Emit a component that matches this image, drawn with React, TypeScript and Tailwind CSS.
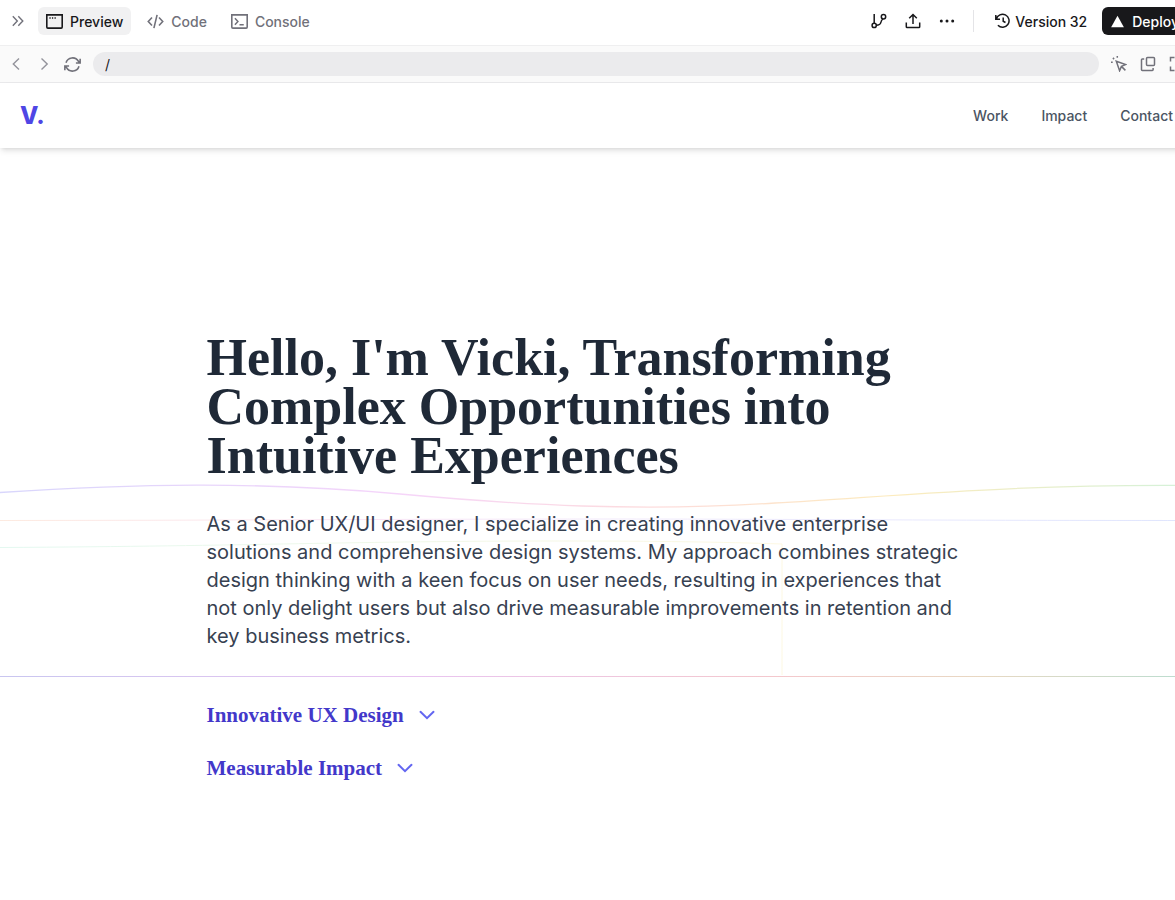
import React from "react";

const stroke = { fill: "none", stroke: "currentColor", strokeWidth: 1.5 } as const;

function Icon({ children, className = "size-4" }: { children: React.ReactNode; className?: string }) {
  return (
    <svg viewBox="0 0 16 16" className={`shrink-0 ${className}`} aria-hidden="true" {...stroke}>
      {children}
    </svg>
  );
}

function Toolbar() {
  return (
    <div className="flex h-[46px] items-center border-b border-[#efeff0] bg-white pl-[10px] pr-2 pb-[3px] text-[14px] font-medium text-[#18181b]">
      <button aria-label="Collapse panel" className="mr-3 text-[#71717a]">
        <Icon><path d="M2.8 3.2 7.3 8l-4.5 4.8M8.3 3.2 12.8 8l-4.5 4.8" strokeWidth="1.4" /></Icon>
      </button>
      <button className="flex h-7 items-center gap-[7px] rounded-md bg-[#f1f1f2] px-2">
        <Icon className="size-[17px]">
          <path d="M.75 1.75h14.5v11.5a1 1 0 0 1-1 1H1.75a1 1 0 0 1-1-1z" />
          <path d="M3.2 4.7h1.2M5.6 4.7h1.2M8 4.7h1.2" strokeWidth="1.2" />
        </Icon>
        Preview
      </button>
      <button className="ml-4 flex items-center gap-[7px] text-[#71717a]">
        <Icon className="size-[17px]"><path d="M4.7 4.2 1.2 8l3.5 3.8M11.3 4.2 14.8 8l-3.5 3.8M9.5 1.8 6.5 14.2" /></Icon>
        Code
      </button>
      <button className="ml-6 flex items-center gap-[7px] text-[#71717a]">
        <Icon className="size-[17px]">
          <path d="M.75 1.75h14.5v11.5a1 1 0 0 1-1 1H1.75a1 1 0 0 1-1-1z" />
          <path d="m3.7 5 2.8 3-2.8 3M8 11h4" strokeWidth="1.4" />
        </Icon>
        Console
      </button>
      <div className="ml-auto flex items-center">
        <button aria-label="Branches" className="mr-[18px]">
          <Icon>
            <path d="M3.2 1v9.2M5.3 12.3c4.2 0 4.2-1.6 4.7-3.4.3-1.3 1-2.2 2-2.9" />
            <circle cx="3.2" cy="12.4" r="2.1" />
            <circle cx="12.5" cy="3.8" r="2.2" />
          </Icon>
        </button>
        <button aria-label="Share" className="mr-[18px]">
          <Icon><path d="M1.3 9.5v4.2c0 .5.3.8.8.8h11.8c.5 0 .8-.3.8-.8V9.5M8 11V1.8M4.2 5.3 8 1.5l3.8 3.8" /></Icon>
        </button>
        <button aria-label="More" className="mr-[18px]">
          <Icon>
            <g fill="currentColor" stroke="none">
              <circle cx="2.3" cy="8" r="1.5" /><circle cx="8" cy="8" r="1.5" /><circle cx="13.7" cy="8" r="1.5" />
            </g>
          </Icon>
        </button>
        <div className="mr-[21px] h-[22px] w-px bg-[#e4e4e7]" />
        <button className="mr-[15px] flex items-center gap-1">
          <Icon>
            <path d="M.8 2v4.2H5M1.3 6A6.5 6.5 0 1 1 2.9 12.3M8.2 4.5v3.7l2.3 1.3" />
          </Icon>
          Version 32
        </button>
        <button className="flex h-7 items-center gap-[7px] rounded-md bg-[#18181b] px-2 text-white">
          <Icon className="size-[15px]"><path d="m8 1.8 6.8 12.2H1.2z" fill="currentColor" stroke="none" /></Icon>
          Deploy
        </button>
      </div>
    </div>
  );
}

function AddressBar() {
  return (
    <div className="flex h-[37px] items-center border-b border-[#e9e9eb] bg-[#fafafa] pl-2 pr-[10px] text-[#71717a]">
      <button aria-label="Back" className="mr-3 text-[#93939b]">
        <Icon><path d="M11 2.5 5.3 8l5.7 5.5" strokeWidth="1.4" /></Icon>
      </button>
      <button aria-label="Forward" className="mr-3 text-[#93939b]">
        <Icon><path d="M5.5 2.5 11.2 8l-5.7 5.5" strokeWidth="1.4" /></Icon>
      </button>
      <button aria-label="Reload" className="mr-3">
        <Icon className="size-[17px]">
          <path d="M1.9 6.4A6.4 6.4 0 0 1 13.6 5l1.2 1.4M15.2 2.6v4h-4M14.1 9.6A6.4 6.4 0 0 1 2.4 11L1.2 9.6M.8 13.4v-4h4" />
        </Icon>
      </button>
      <input
        aria-label="Path"
        defaultValue="/"
        className="h-6 min-w-0 flex-1 rounded-full bg-[#ebebed] px-3 text-[14px] text-[#18181b] outline-none"
      />
      <div className="ml-3 flex gap-[13px]">
        <button aria-label="Select element">
          <Icon>
            <path d="m5.3 5.3 9.4 3.3-4.3 1.8-1.8 4.3zM10.4 10.4l4 4" />
            <path d="M6.3 0v1.7M0 6.3h1.7M1.9 1.9 3.1 3.1" />
          </Icon>
        </button>
        <button aria-label="Open in new window">
          <Icon>
            <rect x="6.5" y="1.5" width="8" height="8" rx="1" />
            <path d="M4.2 3H2.3c-.5 0-.8.3-.8.8v10c0 .4.3.7.8.7h10c.5 0 .8-.3.8-.7V12" />
          </Icon>
        </button>
        <button aria-label="Full screen">
          <Icon><path d="M1.5 5.5v-4h4M10.5 1.5h4v4M14.5 10.5v4h-4M5.5 14.5h-4v-4" /></Icon>
        </button>
      </div>
    </div>
  );
}

function Backdrop() {
  return (
    <svg
      className="pointer-events-none absolute inset-x-0 top-[321px] h-[220px] w-full"
      viewBox="0 0 1195 220"
      preserveAspectRatio="none"
      fill="none"
      aria-hidden="true"
    >
      <defs>
        <linearGradient id="rainbow" gradientUnits="userSpaceOnUse" x1="0" y1="0" x2="1195" y2="0">
          <stop offset="0" stopColor="#d8d6fc" />
          <stop offset="0.33" stopColor="#f5d5fa" />
          <stop offset="0.55" stopColor="#fddcdc" />
          <stop offset="0.75" stopColor="#fcebbd" />
          <stop offset="1" stopColor="#d3f2da" />
        </linearGradient>
        <linearGradient id="base" gradientUnits="userSpaceOnUse" x1="0" y1="0" x2="1195" y2="0">
          <stop offset="0" stopColor="#c9c6f0" />
          <stop offset="0.35" stopColor="#e9c4f0" />
          <stop offset="0.65" stopColor="#f4c8cd" />
          <stop offset="0.82" stopColor="#e8d8c2" />
          <stop offset="1" stopColor="#b9ddd0" />
        </linearGradient>
        <linearGradient id="straight" gradientUnits="userSpaceOnUse" x1="0" y1="0" x2="1195" y2="0">
          <stop offset="0" stopColor="#fdeae0" />
          <stop offset="0.3" stopColor="#fae5f5" />
          <stop offset="0.6" stopColor="#eeeafd" />
          <stop offset="1" stopColor="#dfe5fd" />
        </linearGradient>
        <linearGradient id="faint" gradientUnits="userSpaceOnUse" x1="0" y1="0" x2="782" y2="0">
          <stop offset="0" stopColor="#e3f8f0" />
          <stop offset="1" stopColor="#fdf8e2" />
        </linearGradient>
      </defs>
      <path d="M0 23.5C130 15 260 12 400 25C520 36 640 43 775 34C910 26 1020 15 1195 16.5" stroke="url(#rainbow)" strokeWidth="1.3" />
      <path d="M0 51.5C200 51.5 400 50 600 50S900 51.5 1195 51.5" stroke="url(#straight)" />
      <path d="M0 78.5C260 77 350 72 560 72C660 72 720 73 782 75V206" stroke="url(#faint)" />
      <path d="M0 207.5C400 207.5 800 207.4 1195 207.5" stroke="url(#base)" strokeWidth="1.2" />
    </svg>
  );
}

function Disclosure({ title }: { title: string }) {
  return (
    <button className="flex items-center gap-[14px] font-['Liberation_Serif',serif] text-[21px] leading-7 font-bold text-[#4338ca]">
      {title}
      <Icon className="size-[18px] text-[#6366f1]"><path d="m2.2 5.2 5.8 5.6 5.8-5.6" strokeLinecap="round" strokeWidth="1.8" /></Icon>
    </button>
  );
}

export default function App() {
  return (
    <div className="min-h-screen overflow-hidden bg-white font-['Inter',sans-serif]">
      <div className="-mr-5">
        <Toolbar />
        <AddressBar />
        <header className="relative flex h-[65px] items-center justify-between bg-white pr-[22px] pl-5 shadow-md">
          <a href="#top" className="text-[24px] leading-8 font-extrabold text-[#4f46e5]">V.</a>
          <nav className="flex gap-[33px] text-[14px] font-medium text-[#4b5563]">
            <a href="#work">Work</a>
            <a href="#impact">Impact</a>
            <a href="#contact">Contact</a>
          </nav>
        </header>
        <main id="top" className="relative pt-[185px] pb-[100px]">
          <Backdrop />
          <section className="relative mx-auto w-full max-w-[782px]">
            <h1 className="font-['Liberation_Serif',serif] text-[52px] leading-[49px] font-bold text-[#1f2937]">
              Hello, I'm Vicki, Transforming
              <br />
              Complex Opportunities into
              <br />
              Intuitive Experiences
            </h1>
            <p className="mt-[30px] max-w-[764px] text-[20px] leading-[28px] text-[#374151]">
              As a Senior UX/UI designer, I specialize in creating innovative enterprise solutions and comprehensive
              design systems. My approach combines strategic design thinking with a keen focus on user needs, resulting
              in experiences that not only delight users but also drive measurable improvements in retention and key
              business metrics.
            </p>
            <div className="mt-[51px] flex flex-col items-start gap-[25px]">
              <Disclosure title="Innovative UX Design" />
              <Disclosure title="Measurable Impact" />
            </div>
          </section>
        </main>
      </div>
    </div>
  );
}
